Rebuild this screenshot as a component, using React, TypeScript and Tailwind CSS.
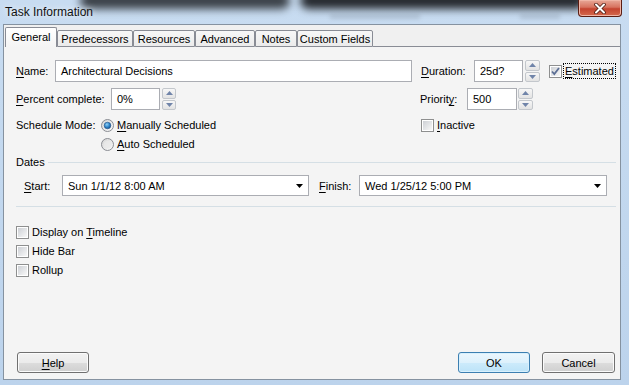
import React from 'react';

const TABS = [
  { label: 'General', w: 'w-[52px]', active: true },
  { label: 'Predecessors', w: 'w-[76px]', active: false },
  { label: 'Resources', w: 'w-[62px]', active: false },
  { label: 'Advanced', w: 'w-[60px]', active: false },
  { label: 'Notes', w: 'w-[42px]', active: false },
  { label: 'Custom Fields', w: 'w-[76px]', active: false },
];

function Key({ children }: { children: React.ReactNode }) {
  return <span className="underline decoration-1 underline-offset-2">{children}</span>;
}

function TextBox({ value, w }: { value: string; w: string }) {
  return (
    <div className={`flex h-[22px] items-center border border-[#abadb3] bg-white pl-[5px] ${w}`}>
      {value}
    </div>
  );
}

function Spinner({ w }: { w: string }) {
  const half =
    'flex flex-1 items-center justify-center rounded-[2px] border border-[#c3c7cc] bg-[linear-gradient(180deg,#f7f7f7,#e3e3e3)]';
  return (
    <div className={`flex h-[22px] flex-col gap-px ${w}`}>
      <div className={half}>
        <svg width="7" height="4" viewBox="0 0 7 4">
          <path d="M0 4 L3.5 0 L7 4 Z" fill="#7084a9" />
        </svg>
      </div>
      <div className={half}>
        <svg width="7" height="4" viewBox="0 0 7 4">
          <path d="M0 0 L3.5 4 L7 0 Z" fill="#7084a9" />
        </svg>
      </div>
    </div>
  );
}

function Combo({ value, w }: { value: string; w: string }) {
  return (
    <div className={`flex h-[21px] items-center justify-between border border-[#abadb3] bg-white pl-[5px] pr-[5px] ${w}`}>
      <span>{value}</span>
      <svg width="7" height="4" viewBox="0 0 7 4">
        <path d="M0 0 L7 0 L3.5 4 Z" fill="#000" />
      </svg>
    </div>
  );
}

function Radio({ checked }: { checked?: boolean }) {
  return (
    <svg width="13" height="13" viewBox="0 0 13 13" className="shrink-0">
      <defs>
        <linearGradient id="rOuter" x1="0" y1="0" x2="1" y2="1">
          <stop offset="0" stopColor="#d4d4d4" />
          <stop offset="1" stopColor="#fbfbfb" />
        </linearGradient>
        <radialGradient id="rDot" cx="0.4" cy="0.35" r="0.7">
          <stop offset="0" stopColor="#8fd0f7" />
          <stop offset="0.6" stopColor="#2a7fc4" />
          <stop offset="1" stopColor="#18508c" />
        </radialGradient>
      </defs>
      <circle cx="6.5" cy="6.5" r="6" fill="url(#rOuter)" stroke="#8a8d93" />
      {checked ? (
        <circle cx="6.5" cy="6.5" r="3.3" fill="url(#rDot)" stroke="#1f4f86" strokeWidth="0.6" />
      ) : (
        <circle cx="6.5" cy="6.5" r="3.8" fill="#e9e9e9" opacity="0.7" />
      )}
    </svg>
  );
}

function Check({ checked }: { checked?: boolean }) {
  return (
    <svg width="13" height="13" viewBox="0 0 13 13" className="shrink-0">
      <defs>
        <linearGradient id="cIn" x1="0" y1="0" x2="1" y2="1">
          <stop offset="0" stopColor="#cdd0d5" />
          <stop offset="1" stopColor="#f8f8f8" />
        </linearGradient>
      </defs>
      <rect x="0.5" y="0.5" width="12" height="12" fill="#fff" stroke="#8e8f8f" />
      <rect x="2" y="2" width="9" height="9" fill="url(#cIn)" />
      {checked && (
        <path d="M3 6.5 L5.3 9 L10 3" fill="none" stroke="#5c6f95" strokeWidth="1.8" />
      )}
    </svg>
  );
}

function Button({ children, primary, w }: { children: React.ReactNode; primary?: boolean; w: string }) {
  return (
    <div
      className={`flex h-[21px] items-center justify-center rounded-[3px] border ${w} ${
        primary
          ? 'border-[#3c7fb1] bg-[linear-gradient(180deg,#ecf7fd_0%,#ddf1fc_50%,#cdebfb_50%,#bce3f8_100%)] shadow-[inset_0_0_0_1px_#d8f0fd]'
          : 'border-[#707070] bg-[linear-gradient(180deg,#f2f2f2_0%,#ebebeb_50%,#dddddd_50%,#cfcfcf_100%)] shadow-[inset_0_0_0_1px_#fbfbfb]'
      }`}
    >
      {children}
    </div>
  );
}

function TitleBar() {
  return (
    <div className="relative h-[24px] shrink-0">
      <div className="pointer-events-none absolute left-[80px] top-[-8px] h-[17px] w-[210px] rounded-full bg-[#3a4047] blur-[4px]" />
      <div className="pointer-events-none absolute left-[300px] top-[-8px] h-[17px] w-[285px] rounded-full bg-[#24282d] blur-[4px]" />
      <div className="pointer-events-none absolute left-[330px] top-[14px] h-[5px] w-[90px] bg-[#7d8a99] opacity-30 blur-[2px]" />
      <div className="pointer-events-none absolute left-[520px] top-[14px] h-[5px] w-[40px] bg-[#7d8a99] opacity-30 blur-[2px]" />
      <span className="relative pl-[5px] text-[12px] leading-[24px] text-[#111] [text-shadow:0_0_6px_#ffffff]">
        Task Information
      </span>
      <div className="absolute right-[7px] top-0 flex h-[17px] w-[44px] items-center justify-center rounded-b-[4px] border border-t-0 border-[#5b1d12] bg-[linear-gradient(180deg,#e8a898_0%,#d7725f_45%,#c4432f_55%,#d46a4e_100%)] shadow-[inset_0_0_0_1px_#f0b5a6]">
        <svg width="12" height="11" viewBox="0 0 12 11">
          <path d="M2 1.5 L10 9.5 M10 1.5 L2 9.5" stroke="#4a1a12" strokeWidth="3.6" strokeLinecap="round" />
          <path d="M2 1.5 L10 9.5 M10 1.5 L2 9.5" stroke="#ffffff" strokeWidth="2" strokeLinecap="round" />
        </svg>
      </div>
    </div>
  );
}

function Tabs() {
  return (
    <div className="flex h-[22px] shrink-0 items-end pl-[1px] pt-[2px]">
      {TABS.map((t) =>
        t.active ? (
          <div
            key={t.label}
            className={`flex h-[20px] items-center justify-center rounded-t-[2px] border border-b-0 border-[#898c95] bg-[linear-gradient(180deg,#ffffff,#f4f4f4)] pb-[1px] ${t.w}`}
          >
            {t.label}
          </div>
        ) : (
          <div
            key={t.label}
            className={`flex h-[17px] items-center justify-center rounded-t-[2px] border border-[#898c95] bg-[linear-gradient(180deg,#f7f7f7,#ebebeb)] ${t.w}`}
          >
            {t.label}
          </div>
        ),
      )}
      <div className="h-px flex-1 bg-[#898c95]" />
    </div>
  );
}

export default function App() {
  return (
    <div className="flex h-[385px] w-[629px] flex-col overflow-hidden whitespace-nowrap bg-[linear-gradient(180deg,#c8dcf1,#bcd3ec)] font-['Liberation_Sans',Arial,sans-serif] text-[11px] leading-[16px] text-black">
      <TitleBar />
      <div className="ml-[3px] flex h-[356px] w-[618px] flex-col border border-[#8592a0] bg-[#f0f0f0]">
        <Tabs />
        <div className="flex flex-1 flex-col bg-[#f4f4f4] pb-[6px] pl-[12px] pr-[4px] pt-[13px]">
          {/* Name / Duration */}
          <div className="flex h-[22px] items-center">
            <div className="flex w-[405px] items-center">
              <span className="w-[39px]">
                <Key>N</Key>ame:
              </span>
              <TextBox value="Architectural Decisions" w="w-[357px]" />
            </div>
            <span className="w-[53px]">
              <Key>D</Key>uration:
            </span>
            <TextBox value="25d?" w="w-[49px]" />
            <div className="ml-[2px]">
              <Spinner w="w-[15px]" />
            </div>
            <div className="ml-[9px] flex items-center">
              <Check checked />
              <span className="ml-px border border-dotted border-black px-[1px] leading-[14px]">
                <Key>E</Key>stimated
              </span>
            </div>
          </div>

          {/* Percent / Priority */}
          <div className="mt-[6px] flex h-[22px] items-center">
            <div className="flex w-[404px] items-center">
              <span className="w-[95px]">
                <Key>P</Key>ercent complete:
              </span>
              <TextBox value="0%" w="w-[49px]" />
              <div className="ml-[2px]">
                <Spinner w="w-[14px]" />
              </div>
            </div>
            <span className="w-[47px]">
              Priorit<Key>y</Key>:
            </span>
            <TextBox value="500" w="w-[50px]" />
            <div className="ml-px">
              <Spinner w="w-[15px]" />
            </div>
          </div>

          {/* Schedule mode / Inactive */}
          <div className="mt-[6px] flex h-[18px] items-center">
            <div className="flex w-[405px] items-center">
              <span className="w-[85px]">Schedule Mode:</span>
              <Radio checked />
              <span className="ml-[3px]">
                <Key>M</Key>anually Scheduled
              </span>
            </div>
            <Check />
            <span className="ml-[3px]">
              <Key>I</Key>nactive
            </span>
          </div>
          <div className="mt-px flex h-[18px] items-center pl-[85px]">
            <Radio />
            <span className="ml-[3px]">
              <Key>A</Key>uto Scheduled
            </span>
          </div>

          {/* Dates group */}
          <div className="mt-px flex h-[16px] items-center">
            <span>Dates</span>
            <div className="ml-[3px] h-px flex-1 bg-[#d5dfe5]" />
          </div>
          <div className="mt-[5px] flex h-[21px] items-center pl-[8px]">
            <span className="w-[38px]">
              <Key>S</Key>tart:
            </span>
            <Combo value="Sun 1/1/12 8:00 AM" w="w-[247px]" />
            <span className="ml-[10px] w-[40px]">
              <Key>F</Key>inish:
            </span>
            <Combo value="Wed 1/25/12 5:00 PM" w="w-[248px]" />
          </div>
          <div className="mt-[10px] h-px bg-[#d5dfe5]" />

          {/* Options */}
          <div className="mt-[16px] flex h-[18px] items-center">
            <Check />
            <span className="ml-[3px]">
              Display on <Key>T</Key>imeline
            </span>
          </div>
          <div className="mt-px flex h-[18px] items-center">
            <Check />
            <span className="ml-[3px]">Hide Bar</span>
          </div>
          <div className="mt-px flex h-[18px] items-center">
            <Check />
            <span className="ml-[3px]">Rollup</span>
          </div>

          <div className="flex-1" />

          {/* Buttons */}
          <div className="flex items-center">
            <div className="ml-px">
              <Button w="w-[72px]">
                <Key>H</Key>elp
              </Button>
            </div>
            <div className="flex-1" />
            <Button w="w-[72px]" primary>
              OK
            </Button>
            <div className="ml-[12px] mr-px">
              <Button w="w-[73px]">Cancel</Button>
            </div>
          </div>
        </div>
      </div>
    </div>
  );
}
